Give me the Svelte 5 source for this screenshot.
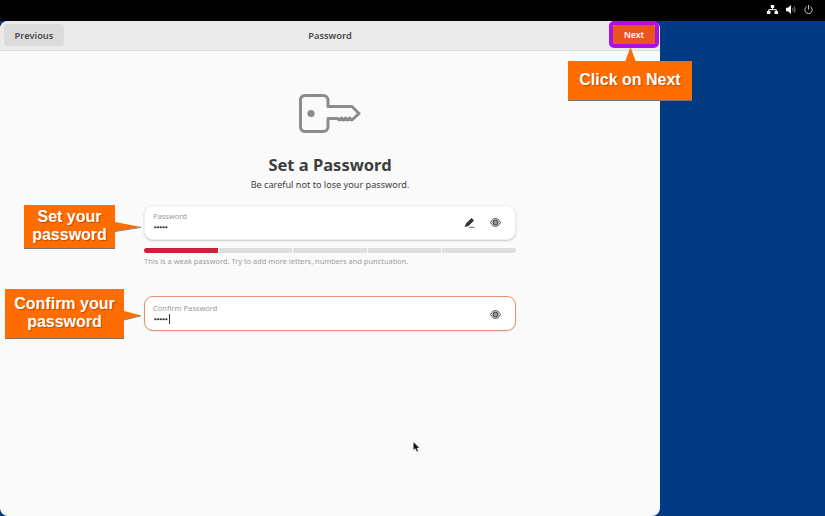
<script>
  const levels = [true, false, false, false, false]
</script>

<main class="screen">
  <div class="topbar">
    <svg class="tray" width="11" height="9" viewBox="0 0 11 9">
      <rect x="3.800" y="0" width="3.400" height="3" fill="#fff" />
      <rect x="0" y="6" width="3.400" height="3" fill="#fff" />
      <rect x="7.600" y="6" width="3.400" height="3" fill="#fff" />
      <path d="M5.500 3V4.700M1.700 6V4.700H9.300V6" stroke="#fff" stroke-width="1" fill="none" />
    </svg>
    <svg class="tray" width="10" height="9" viewBox="0 0 10 9">
      <path d="M0 2.800H2L5 0V9L2 6.200H0Z" fill="#fff" />
      <path d="M6.500 2.800C7.200 3.800 7.200 5.200 6.500 6.200M8 1.500C9.300 3.200 9.300 5.800 8 7.500" stroke="#888" stroke-width="1" fill="none" />
    </svg>
    <svg class="tray" width="9" height="9" viewBox="0 0 9 9">
      <path d="M2.700 1.600A3.700 3.700 0 1 0 6.300 1.600" stroke="#ddd" stroke-width="0.900" fill="none" />
      <path d="M4.500 0V4.500" stroke="#ddd" stroke-width="0.900" />
    </svg>
  </div>

  <div class="desktop">
    <section class="window">
      <header class="header">
        <button class="btn prev">Previous</button>
        <span class="title">Password</span>
        <button class="btn next">Next</button>
      </header>

      <div class="content">
        <svg class="key" width="62" height="40" viewBox="0 0 62 40">
          <path
            d="M6 1.500H24C27 1.500 29 3.500 29 6.500V12.500H53L60 19.500L53 26L50.500 24L48.500 26L46.500 24L44.500 26L42.500 24L40.500 26L38.500 24.500H29V32.500C29 35.500 27 37.500 24 37.500H6C3 37.500 1.500 35.500 1.500 32.500V6.500C1.500 3.500 3 1.500 6 1.500Z"
            fill="none"
            stroke="#8c8c8c"
            stroke-width="3"
            stroke-linejoin="round"
          />
          <circle cx="12" cy="19.500" r="3.600" fill="#8c8c8c" />
        </svg>

        <h1>Set a Password</h1>
        <p class="sub">Be careful not to lose your password.</p>

        <div class="form">
          <div class="entry">
            <div class="field">
              <span class="label">Password</span>
              <span class="dots">•••••</span>
            </div>
            <svg class="icon pen" width="11" height="11" viewBox="0 0 11 11">
              <path d="M0.500 10L2 6.500L7.500 1L10 3.500L4.500 9Z" fill="#333" />
              <path d="M5 10.300H10.500" stroke="#555" stroke-width="0.900" />
            </svg>
            <svg class="icon" width="11" height="9" viewBox="0 0 11 9">
              <path d="M0.500 4.500C2 1.500 3.800 0.500 5.500 0.500C7.200 0.500 9 1.500 10.500 4.500C9 7.500 7.200 8.500 5.500 8.500C3.800 8.500 2 7.500 0.500 4.500Z" fill="#ddd" stroke="#555" />
              <circle cx="5.500" cy="4.500" r="2.400" fill="#999" stroke="#333" stroke-width="1" />
            </svg>
          </div>

          <div class="bar">
            {#each levels as on}
              <span class="seg" class:on></span>
            {/each}
          </div>
          <p class="hint">This is a weak password. Try to add more letters, numbers and punctuation.</p>

          <div class="entry focus">
            <div class="field">
              <span class="label">Confirm Password</span>
              <span class="dots">•••••<i class="caret"></i></span>
            </div>
            <svg class="icon" width="11" height="9" viewBox="0 0 11 9">
              <path d="M0.500 4.500C2 1.500 3.800 0.500 5.500 0.500C7.200 0.500 9 1.500 10.500 4.500C9 7.500 7.200 8.500 5.500 8.500C3.800 8.500 2 7.500 0.500 4.500Z" fill="#ddd" stroke="#555" />
              <circle cx="5.500" cy="4.500" r="2.400" fill="#999" stroke="#333" stroke-width="1" />
            </svg>
          </div>
        </div>
      </div>
    </section>
  </div>

  <!-- tutorial annotations sit on top of the screenshot -->
  <div class="ring"></div>
  <svg class="arrows" width="825" height="516" viewBox="0 0 825 516">
    <path d="M630.500 47L636 62H625Z" fill="#ff6c00" />
    <path d="M115 222L141 227L115 231.500Z" fill="#ff6c00" />
    <path d="M115 231.500L141 227.300" stroke="#8a8178" stroke-width="1" />
    <path d="M124 311L141 315.500L124 320Z" fill="#ff6c00" />
    <path d="M124 320L141 315.800" stroke="#8a8178" stroke-width="1" />
  </svg>
  <div class="callout c-next">Click on Next</div>
  <div class="callout c-set">Set your<br />password</div>
  <div class="callout c-confirm">Confirm your<br />password</div>

  <svg class="cursor" width="7" height="12" viewBox="0 0 9 14">
    <path d="M0.500 0.500V11L3 8.800L5 13L6.500 12.300L5 8.300H8.300Z" fill="#111" stroke="#ccc" stroke-width="0.500" />
  </svg>
</main>

<style>
  :global(body) {
    margin: 0;
    overflow: hidden;
  }

  .screen {
    position: relative;
    width: 825px;
    height: 516px;
    overflow: hidden;
    display: flex;
    flex-direction: column;
    background: #000;
    font-family: "Noto Sans", "Open Sans", sans-serif;
  }

  .topbar {
    height: 21px;
    flex: none;
    display: flex;
    align-items: center;
    justify-content: flex-end;
    gap: 8px;
    padding: 0 12px 2px 0;
    box-sizing: border-box;
  }

  .desktop {
    flex: 1;
    min-height: 0;
    background: #023a84;
  }

  .window {
    width: 660px;
    height: 100%;
    display: flex;
    flex-direction: column;
    background: #fafafa;
    border-radius: 8px;
    overflow: hidden;
  }

  .header {
    height: 30px;
    flex: none;
    box-sizing: border-box;
    display: grid;
    grid-template-columns: 1fr auto 1fr;
    align-items: center;
    padding: 3px 4px 4px;
    background: #ebebeb;
    border-bottom: 1px solid #dcdcdc;
  }

  .title {
    font-size: 9.300px;
    font-weight: 600;
    color: #4a4a4a;
  }

  .btn {
    border: 0;
    border-radius: 4px;
    height: 22px;
    font-family: inherit;
    font-size: 9.300px;
    font-weight: 600;
    padding: 0;
  }

  .prev {
    width: 60px;
    background: #dcdcdc;
    color: #4a4a4a;
  }

  .next {
    width: 42px;
    justify-self: end;
    margin-right: 1px;
    background: #e95420;
    color: #fff;
    font-size: 8.600px;
  }

  .content {
    flex: 1;
    display: flex;
    flex-direction: column;
    align-items: center;
    padding-top: 43px;
  }

  .key {
    display: block;
  }

  h1 {
    margin: 20px 0 0;
    font-size: 16.500px;
    line-height: 22px;
    font-weight: 700;
    color: #3d3d3d;
  }

  .sub {
    margin: 2px 0 0;
    font-size: 9.150px;
    line-height: 14px;
    color: #3d3d3d;
  }

  .form {
    width: 372px;
    margin-top: 13px;
  }

  .entry {
    height: 35px;
    box-sizing: border-box;
    display: flex;
    align-items: center;
    gap: 15px;
    padding: 0 14px 0 8px;
    background: #fff;
    border: 1px solid #eeeeee;
    border-radius: 9px;
    box-shadow: 0 1px 2px rgba(0, 0, 0, 0.2);
  }

  .entry.focus {
    margin-top: 29px;
    padding-top: 2px;
    border-color: #e58d6f;
    box-shadow: 0 1px 2px rgba(0, 0, 0, 0.08);
  }

  .field {
    flex: 1;
    display: flex;
    flex-direction: column;
    padding-bottom: 2px;
  }

  .label {
    font-size: 7.500px;
    line-height: 11px;
    color: #9a9a9a;
  }

  .dots {
    display: flex;
    align-items: center;
    height: 11px;
    font-family: "DejaVu Sans", sans-serif;
    font-size: 7.500px;
    letter-spacing: -1.700px;
    color: #333;
  }

  .caret {
    width: 1px;
    height: 10px;
    margin-left: 2px;
    background: #333;
  }

  .icon {
    flex: none;
  }

  .bar {
    display: flex;
    gap: 1px;
    margin-top: 8px;
    height: 5px;
    border-radius: 3px;
    overflow: hidden;
  }

  .seg {
    flex: 1;
    background: #dedede;
  }

  .seg.on {
    background: #c7243a;
  }

  .hint {
    margin: 3px 0 0;
    font-size: 7.450px;
    line-height: 11px;
    color: #9d9d9d;
  }

  .ring {
    position: absolute;
    left: 609px;
    top: 21px;
    width: 50px;
    height: 27px;
    box-sizing: border-box;
    border: 4px solid #ad10e0;
    border-radius: 5px;
  }

  .arrows {
    position: absolute;
    left: 0;
    top: 0;
    pointer-events: none;
  }

  .callout {
    position: absolute;
    box-sizing: border-box;
    display: flex;
    align-items: center;
    justify-content: center;
    text-align: center;
    background: #ff6c00;
    border-bottom: 1px solid #77736e;
    color: #fff;
    font-family: "Liberation Sans", Arial, sans-serif;
    font-weight: 700;
    text-shadow: 1px 1px 1px rgba(90, 40, 0, 0.45);
  }

  .c-next {
    left: 568px;
    top: 61px;
    width: 124px;
    height: 40px;
    padding-bottom: 2px;
    font-size: 16px;
  }

  .c-set {
    left: 24px;
    top: 205px;
    width: 91px;
    height: 44px;
    padding-bottom: 2px;
    font-size: 16px;
    line-height: 18px;
  }

  .c-confirm {
    left: 5px;
    top: 289px;
    width: 119px;
    height: 50px;
    padding-bottom: 2px;
    font-size: 16px;
    line-height: 18px;
  }

  .cursor {
    position: absolute;
    left: 413px;
    top: 441px;
  }
</style>
